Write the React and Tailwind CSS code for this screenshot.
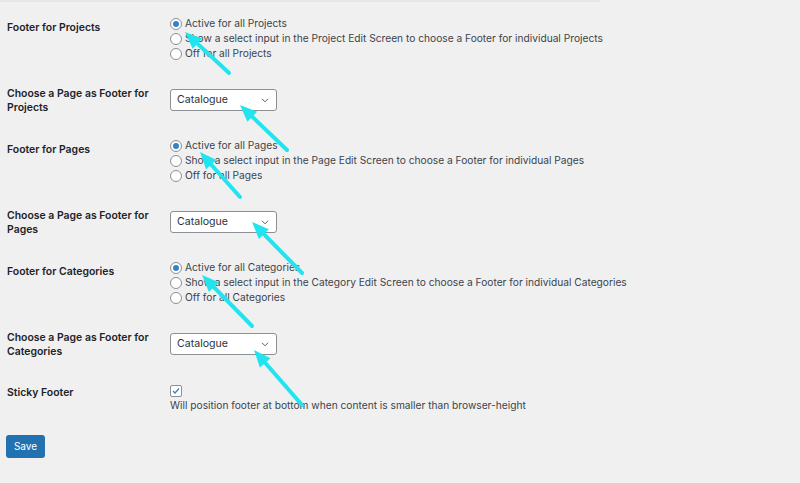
const font = { fontFamily: 'Inter, "Noto Sans", sans-serif' };

const Radio = ({ checked, label }) => (
  <label className="flex items-center h-[15px] text-[10.2px] text-[#3c434a]">
    <span className="w-[12px] h-[12px] rounded-full border border-[#8c8f94] bg-white flex items-center justify-center mr-[3px] shrink-0">
      {checked && <span className="w-[6px] h-[6px] rounded-full bg-[#3582c4]" />}
    </span>
    {label}
  </label>
);

const Select = () => (
  <div className="w-[107px] h-[22px] bg-white border border-[#8c8f94] rounded-[3px] flex items-center justify-between pl-[6px] pr-[5px] text-[10.6px] text-[#2c3338]">
    <span>Catalogue</span>
    <svg width="12" height="12" viewBox="0 0 20 20" fill="none" stroke="#50575e" strokeWidth="1.6">
      <path d="M5 8l5 5 5-5" />
    </svg>
  </div>
);

const RadioRow = ({ title, items }) => (
  <div className="flex h-[73px]">
    <div className="w-[163px] pt-[20px] text-[10.45px] leading-[14px] font-semibold text-[#1d2327]">{title}</div>
    <div className="pt-[15px]">
      {items.map((it, i) => (
        <Radio key={i} checked={i === 0} label={it} />
      ))}
    </div>
  </div>
);

const SelectRow = ({ title }) => (
  <div className="flex h-[49px]">
    <div className="w-[163px] pt-[13px] text-[10.45px] leading-[14px] font-semibold text-[#1d2327]">{title}</div>
    <div className="pt-[15px]">
      <Select />
    </div>
  </div>
);

const arrows = [
  [229, 73, 185, 32],
  [287, 150, 240, 105],
  [240, 197, 200, 152],
  [302, 273, 252, 222],
  [252, 326, 202, 275],
  [302, 405, 254, 350],
];

const Arrows = () => (
  <svg className="absolute inset-0 pointer-events-none" width="800" height="483">
    {arrows.map(([x1, y1, x2, y2], i) => {
      const a = Math.atan2(y2 - y1, x2 - x1);
      const L = 17;
      const W = 7;
      const bx = x2 - L * Math.cos(a);
      const by = y2 - L * Math.sin(a);
      const px = -Math.sin(a) * W;
      const py = Math.cos(a) * W;
      return (
        <g key={i}>
          <line x1={x1} y1={y1} x2={bx} y2={by} stroke="#22e4ee" strokeWidth="4" strokeLinecap="round" />
          <polygon points={`${x2},${y2} ${bx + px},${by + py} ${bx - px},${by - py}`} fill="#22e4ee" />
        </g>
      );
    })}
  </svg>
);

export default function App() {
  return (
    <div className="relative w-[800px] h-[483px] bg-[#f0f0f1] overflow-hidden" style={font}>
      <div className="w-[600px] h-[2px] bg-[#e6e6e9]" />
      <div className="pl-[7px] -mt-[1px]">
        <RadioRow
          title="Footer for Projects"
          items={[
            'Active for all Projects',
            'Show a select input in the Project Edit Screen to choose a Footer for individual Projects',
            'Off for all Projects',
          ]}
        />
        <SelectRow title={<>Choose a Page as Footer for<br />Projects</>} />
        <RadioRow
          title="Footer for Pages"
          items={[
            'Active for all Pages',
            'Show a select input in the Page Edit Screen to choose a Footer for individual Pages',
            'Off for all Pages',
          ]}
        />
        <SelectRow title={<>Choose a Page as Footer for<br />Pages</>} />
        <RadioRow
          title="Footer for Categories"
          items={[
            'Active for all Categories',
            'Show a select input in the Category Edit Screen to choose a Footer for individual Categories',
            'Off for all Categories',
          ]}
        />
        <SelectRow title={<>Choose a Page as Footer for<br />Categories</>} />
        <div className="flex h-[65px]">
          <div className="w-[163px] pt-[19px] text-[10.45px] leading-[14px] font-semibold text-[#1d2327]">Sticky Footer</div>
          <div className="pt-[18px] text-[10.2px] text-[#3c434a]">
            <span className="w-[12px] h-[12px] border border-[#8c8f94] rounded-[2px] bg-white flex items-center justify-center">
              <svg width="10" height="10" viewBox="0 0 20 20" fill="none" stroke="#3582c4" strokeWidth="2.5">
                <path d="M4 10l4 4 8-9" />
              </svg>
            </span>
            <p className="leading-[15px] mt-[1px]">Will position footer at bottom when content is smaller than browser-height</p>
          </div>
        </div>
      </div>
      <div className="pl-[6px]">
        <button className="w-[39px] h-[23px] bg-[#2271b1] text-white text-[10px] rounded-[3px]">Save</button>
      </div>
      <Arrows />
    </div>
  );
}
